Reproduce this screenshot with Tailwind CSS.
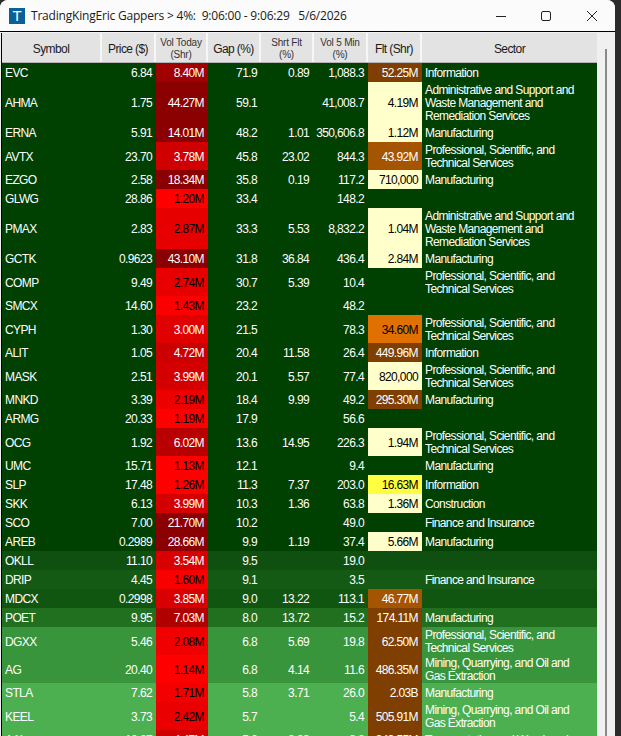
<!DOCTYPE html>
<html lang="en">
<head>
  <meta charset="UTF-8" />
  <title>TradingKingEric Gappers</title>
  <script src="https://cdn.jsdelivr.net/npm/@tailwindcss/browser@4"></script>
</head>
<body class="h-[736px] w-[621px] overflow-hidden bg-[#2b2b2b] font-['Liberation_Sans',sans-serif]">
  <div class="h-[736px] w-[615px] overflow-hidden rounded-t-[8px] bg-[#f0f0f0]">
    <header class="flex h-[31px] items-center bg-[#fbfbfb]">
      <div class="ml-[9px] flex h-[16px] w-[16px] items-center justify-center bg-[#0b6197] text-[15px] leading-none text-white">T</div>
      <div class="ml-[6px] whitespace-pre pt-[1px] font-['Open_Sans',sans-serif] text-[12px] tracking-[-0.2px] text-[#1a1a1a]">TradingKingEric Gappers &gt; 4%:  9:06:00 - 9:06:29   5/6/2026</div>
      <div class="ml-auto flex items-center pr-[18px]">
        <svg class="mr-[35px]" width="10" height="10" viewBox="0 0 10 10"><path d="M0 5.5h10" stroke="#222" /></svg>
        <svg class="mr-[36px]" width="10" height="10" viewBox="0 0 10 10"><rect x="0.5" y="0.5" width="9" height="9" rx="1.5" fill="none" stroke="#222" /></svg>
        <svg width="10" height="10" viewBox="0 0 10 10"><path d="M0 0l10 10M10 0L0 10" stroke="#222" /></svg>
      </div>
    </header>
    <div class="border-t border-black pt-[1px] pl-[1px]">
      <div class="flex border-l border-black">
        <div class="w-[595px]">
          <div class="flex h-[30px] border-b border-[#b4b4b4] bg-[#e3e3e3] text-center text-[12px] leading-[13px] tracking-[-0.6px] text-[#1a1a1a]">
            <div class="flex w-[100px] items-center justify-center border-r-2 border-[#f6f6f6] pt-[3px]">Symbol</div>
            <div class="flex w-[54px] items-center justify-center border-r-2 border-[#f6f6f6] pt-[3px]">Price ($)</div>
            <div class="flex w-[52px] items-center justify-center border-r-2 border-[#f6f6f6] pt-[3px] text-[10px] leading-[12px] tracking-[-0.2px] text-[#333]">Vol Today<br />(Shr)</div>
            <div class="flex w-[53px] items-center justify-center border-r-2 border-[#f6f6f6] pt-[3px]">Gap (%)</div>
            <div class="flex w-[53px] items-center justify-center border-r-2 border-[#f6f6f6] pt-[3px] text-[10px] leading-[12px] tracking-[-0.2px] text-[#333]">Shrt Flt<br />(%)</div>
            <div class="flex w-[54px] items-center justify-center border-r-2 border-[#f6f6f6] pt-[3px] text-[10px] leading-[12px] tracking-[-0.2px] text-[#333]">Vol 5 Min<br />(%)</div>
            <div class="flex w-[54px] items-center justify-center border-r-2 border-[#f6f6f6] pt-[3px]">Flt (Shr)</div>
            <div class="flex w-[175px] items-center justify-center pt-[3px]">Sector</div>
          </div>
          <div id="rows" class="text-[12px] leading-[13px] tracking-[-0.62px] text-white"></div>
        </div>
        <div class="flex w-[18px] justify-center">
          <div class="mt-[16px] h-[690px] w-[2px] bg-[#8a8a8a]"></div>
        </div>
      </div>
    </div>
  </div>
  <script>
    const PRO = 'Professional, Scientific, and Technical Services';
    const ADM = 'Administrative and Support and Waste Management and Remediation Services';
    const MIN = 'Mining, Quarrying, and Oil and Gas Extraction';
    const MFG = 'Manufacturing';
    const INFO = 'Information';
    const FIN = 'Finance and Insurance';
    const S = 'h-[19px]', M = 'h-[28px]', L = 'h-[41px]';
    const BASE = 'bg-[#004000]';
    const BROWN = 'bg-[#7f3f00] text-white', PALE = 'bg-[#ffffcc] text-black';
    // symbol, price, vol, vol colour, gap, short float, vol 5m, float, float colour, sector, row colour, height
    const data = [
      ['EVC','6.84','8.40M','bg-[#a00000] text-white','71.9','0.89','1,088.3','52.25M',BROWN,INFO,BASE,S],
      ['AHMA','1.75','44.27M','bg-[#8b0000] text-white','59.1','','41,008.7','4.19M',PALE,ADM,BASE,L],
      ['ERNA','5.91','14.01M','bg-[#8b0000] text-white','48.2','1.01','350,606.8','1.12M',PALE,MFG,BASE,S],
      ['AVTX','23.70','3.78M','bg-[#d00000] text-white','45.8','23.02','844.3','43.92M','bg-[#a55400] text-white',PRO,BASE,M],
      ['EZGO','2.58','18.34M','bg-[#8b0000] text-white','35.8','0.19','117.2','710,000',PALE,MFG,BASE,S],
      ['GLWG','28.86','1.20M','bg-[#ff0000] text-black','33.4','','148.2','','','',BASE,S],
      ['PMAX','2.83','2.87M','bg-[#e60000] text-black','33.3','5.53','8,832.2','1.04M',PALE,ADM,BASE,L],
      ['GCTK','0.9623','43.10M','bg-[#8b0000] text-white','31.8','36.84','436.4','2.84M',PALE,MFG,BASE,S],
      ['COMP','9.49','2.74M','bg-[#e80000] text-black','30.7','5.39','10.4','','',PRO,BASE,M],
      ['SMCX','14.60','1.43M','bg-[#fa0000] text-black','23.2','','48.2','','','',BASE,S],
      ['CYPH','1.30','3.00M','bg-[#e00000] text-white','21.5','','78.3','34.60M','bg-[#e07000] text-black',PRO,BASE,M],
      ['ALIT','1.05','4.72M','bg-[#cc0000] text-white','20.4','11.58','26.4','449.96M',BROWN,INFO,BASE,S],
      ['MASK','2.51','3.99M','bg-[#d40000] text-white','20.1','5.57','77.4','820,000',PALE,PRO,BASE,M],
      ['MNKD','3.39','2.19M','bg-[#ee0000] text-black','18.4','9.99','49.2','295.30M',BROWN,MFG,BASE,S],
      ['ARMG','20.33','1.19M','bg-[#ff0000] text-black','17.9','','56.6','','','',BASE,S],
      ['OCG','1.92','6.02M','bg-[#b80000] text-white','13.6','14.95','226.3','1.94M',PALE,PRO,BASE,M],
      ['UMC','15.71','1.13M','bg-[#ff0000] text-black','12.1','','9.4','','',MFG,BASE,S],
      ['SLP','17.48','1.26M','bg-[#ff0000] text-black','11.3','7.37','203.0','16.63M','bg-[#ffff40] text-black',INFO,BASE,S],
      ['SKK','6.13','3.99M','bg-[#d40000] text-white','10.3','1.36','63.8','1.36M',PALE,'Construction',BASE,S],
      ['SCO','7.00','21.70M','bg-[#8b0000] text-white','10.2','','49.0','','',FIN,BASE,S],
      ['AREB','0.2989','28.66M','bg-[#8b0000] text-white','9.9','1.19','37.4','5.66M',PALE,MFG,BASE,S],
      ['OKLL','11.10','3.54M','bg-[#d80000] text-white','9.5','','19.0','','','','bg-[#0f4f0f]',S],
      ['DRIP','4.45','1.60M','bg-[#f80000] text-black','9.1','','3.5','','',FIN,'bg-[#145a14]',S],
      ['MDCX','0.2998','3.85M','bg-[#d80000] text-white','9.0','13.22','113.1','46.77M','bg-[#a55400] text-white','','bg-[#105510]',S],
      ['POET','9.95','7.03M','bg-[#b00000] text-white','8.0','13.72','15.2','174.11M',BROWN,MFG,'bg-[#207020]',S],
      ['DGXX','5.46','2.08M','bg-[#f00000] text-black','6.8','5.69','19.8','62.50M',BROWN,PRO,'bg-[#38953b]',M],
      ['AG','20.40','1.14M','bg-[#ff0000] text-black','6.8','4.14','11.6','486.35M',BROWN,MIN,'bg-[#38953b]',M],
      ['STLA','7.62','1.71M','bg-[#f40000] text-black','5.8','3.71','26.0','2.03B',BROWN,MFG,'bg-[#4caf50]',S],
      ['KEEL','3.73','2.42M','bg-[#ea0000] text-black','5.7','','5.4','505.91M',BROWN,MIN,'bg-[#4caf50]',M],
      ['AAL','10.27','4.47M','bg-[#d00000] text-white','5.6','8.93','3.8','343.55M',BROWN,'Transportation and Warehousing','bg-[#4caf50]',S],
    ];
    document.getElementById('rows').innerHTML = data.map(r => `
      <div class="flex ${r[11]} ${r[10]}">
        <div class="flex w-[100px] items-center pl-[3px] pt-[2px]">${r[0]}</div>
        <div class="flex w-[54px] items-center justify-end pr-[4px] pt-[2px]">${r[1]}</div>
        <div class="flex w-[52px] items-center justify-end pr-[4px] pt-[2px] ${r[3]}">${r[2]}</div>
        <div class="flex w-[53px] items-center justify-end pr-[4px] pt-[2px]">${r[4]}</div>
        <div class="flex w-[53px] items-center justify-end pr-[5px] pt-[2px]">${r[5]}</div>
        <div class="flex w-[54px] items-center justify-end pr-[4px] pt-[2px]">${r[6]}</div>
        <div class="flex w-[54px] items-center justify-end pr-[4px] pt-[2px] ${r[8]}">${r[7]}</div>
        <div class="flex w-[175px] items-center pl-[3px] pr-[8px] pt-[2px]">${r[9]}</div>
      </div>`).join('');
  </script>
</body>
</html>
